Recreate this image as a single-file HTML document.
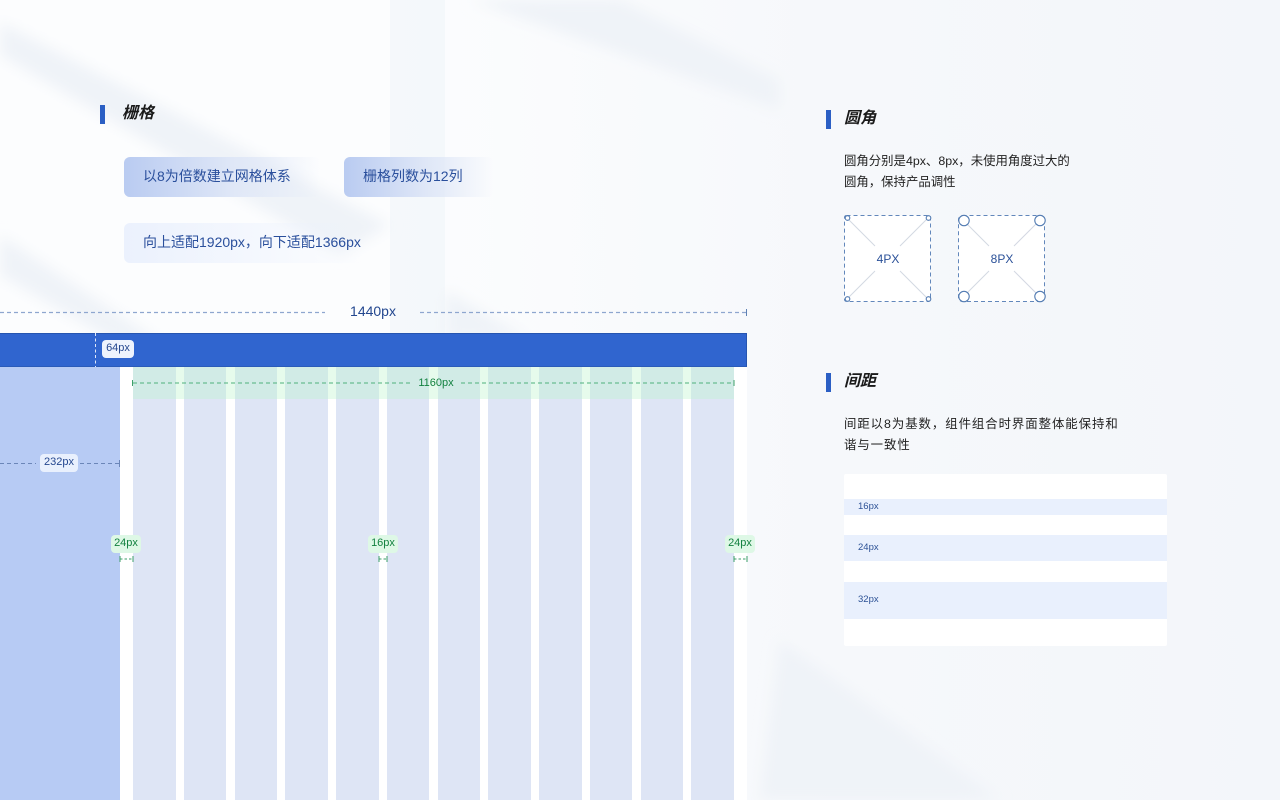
<!DOCTYPE html>
<html lang="zh"><head><meta charset="utf-8"><title>栅格</title>
<style>
html,body{margin:0;padding:0;width:1280px;height:800px;overflow:hidden}
body{position:relative;background:#f6f8fb;font-family:"Liberation Sans","Noto Sans CJK SC",sans-serif}
.a{position:absolute}
.t{position:absolute;white-space:nowrap;line-height:20px}
.bar{position:absolute;width:5px;height:19px;background:#2b5fc4}
.h{position:absolute;white-space:nowrap;font-size:16px;font-weight:700;font-style:italic;color:#1a1a1a;line-height:20px}
.chip{position:absolute;height:40px;border-radius:6px;color:#2a4f9c;font-size:14px;line-height:39px;padding-left:19px;box-sizing:border-box;white-space:nowrap}
.p{position:absolute;font-size:12.4px;color:#222;line-height:20.5px;white-space:nowrap}
.col{position:absolute;top:367px;bottom:0;width:42.5px;background:#dee5f5}
.lab{position:absolute;height:18px;line-height:17px;font-size:11px;text-align:center;border-radius:4px;background:#e9f0fd;color:#25478f}
.g{background:#def8e6;color:#12813f;height:18px}
.row{position:absolute;left:844px;width:323px;background:#e9f0fd;color:#2d5296;font-size:9.5px;padding-left:14px;box-sizing:border-box}
</style></head><body>
<svg class="a" style="left:0;top:0" width="1280" height="800">
<defs>
<linearGradient id="bg" x1="0" y1="0" x2="1" y2="0"><stop offset="0" stop-color="#fcfdfe"/><stop offset=".3" stop-color="#fcfdfe"/><stop offset=".65" stop-color="#f6f8fb"/><stop offset="1" stop-color="#f3f6fa"/></linearGradient>
<filter id="b"><feGaussianBlur stdDeviation="7"/></filter>
</defs>
<rect width="1280" height="800" fill="url(#bg)"/>
<rect x="390" y="0" width="55" height="340" fill="#f3f6fa" opacity=".8"/>
<g filter="url(#b)" fill="#eff3f8">
<polygon points="0,22 0,55 340,255 390,225"/>
<polygon points="0,235 0,275 120,345 165,345"/>
<polygon points="470,0 620,0 780,80 780,110"/>
<polygon points="445,290 530,340 445,340"/>
<polygon points="780,640 1000,800 760,800"/>
</g>
</svg>

<div class="bar" style="left:100px;top:105px"></div>
<div class="h" style="left:122px;top:104px">栅格</div>
<div class="chip" style="left:124px;top:157px;width:196px;background:linear-gradient(90deg,#b9cbf1,#dfe7f7 55%,rgba(250,252,254,0))">以8为倍数建立网格体系</div>
<div class="chip" style="left:344px;top:157px;width:150px;background:linear-gradient(90deg,#b9cbf1,#dfe7f7 55%,rgba(250,252,254,0))">栅格列数为12列</div>
<div class="chip" style="left:124px;top:223px;width:240px;background:linear-gradient(90deg,#ebf1fd,rgba(250,252,254,0))">向上适配1920px，向下适配1366px</div>

<svg class="a" style="left:0;top:305px" width="750" height="16">
<line x1="0" y1="7.5" x2="325" y2="7.5" stroke="#8ea6cf" stroke-width="1.2" stroke-dasharray="4 3"/>
<line x1="420" y1="7.5" x2="746" y2="7.5" stroke="#8ea6cf" stroke-width="1.2" stroke-dasharray="4 3"/>
<line x1="746.5" y1="4" x2="746.5" y2="11" stroke="#5f81b4"/>
</svg>
<div class="t" style="left:330px;top:301px;width:86px;text-align:center;color:#23478f;font-size:14px">1440px</div>

<div class="a" style="left:120px;top:367px;width:627px;bottom:0;background:#fff"></div>
<div class="a" style="left:0;top:367px;width:120px;bottom:0;background:#b7cbf4"></div>
<div class="a" style="left:0;top:333px;width:747px;height:34px;background:#3065cf;border-top:1px solid #2655b0;border-right:1px solid #2655b0;border-bottom:1px solid #2a5bb9;box-sizing:border-box"></div>
<svg class="a" style="left:95px;top:333px" width="2" height="34"><line x1=".5" y1="0" x2=".5" y2="34" stroke="#dfe8fa" stroke-dasharray="3 2.5"/></svg>
<div class="lab" style="left:102px;top:340px;width:32px;border:0;background:#eef3fd">64px</div>

<div class="col" style="left:133px"></div>
<div class="col" style="left:183.75px"></div>
<div class="col" style="left:234.5px"></div>
<div class="col" style="left:285.25px"></div>
<div class="col" style="left:336px"></div>
<div class="col" style="left:386.75px"></div>
<div class="col" style="left:437.5px"></div>
<div class="col" style="left:488.25px"></div>
<div class="col" style="left:539px"></div>
<div class="col" style="left:589.75px"></div>
<div class="col" style="left:640.5px"></div>
<div class="col" style="left:691.25px"></div>

<div class="a" style="left:133px;top:367px;width:601px;height:32px;background:rgba(190,245,205,.38)"></div>

<svg class="a" style="left:0;top:0;pointer-events:none" width="780" height="600">
<g fill="none">
<line x1="133" y1="383" x2="413" y2="383" stroke="#4fb17c" stroke-width="1" stroke-dasharray="4 3"/>
<line x1="461" y1="383" x2="734" y2="383" stroke="#4fb17c" stroke-width="1" stroke-dasharray="4 3"/>
<line x1="132.5" y1="380" x2="132.5" y2="386" stroke="#3e9f6a"/>
<line x1="734" y1="380" x2="734" y2="386" stroke="#3e9f6a"/>
<line x1="0" y1="463.5" x2="36" y2="463.5" stroke="#6b86b8" stroke-dasharray="4 3"/>
<line x1="80" y1="463.5" x2="120" y2="463.5" stroke="#6b86b8" stroke-dasharray="4 3"/>
<line x1="119.5" y1="460" x2="119.5" y2="467" stroke="#6b86b8"/>
<g stroke="#3e9f6a">
<line x1="120" y1="559" x2="133" y2="559" stroke-dasharray="2.5 2"/><line x1="120" y1="556" x2="120" y2="562"/><line x1="133" y1="556" x2="133" y2="562"/>
<line x1="379" y1="559" x2="387" y2="559" stroke-dasharray="2.5 2"/><line x1="379" y1="556" x2="379" y2="562"/><line x1="387" y1="556" x2="387" y2="562"/>
<line x1="734" y1="559" x2="747" y2="559" stroke-dasharray="2.5 2"/><line x1="734" y1="556" x2="734" y2="562"/><line x1="747" y1="556" x2="747" y2="562"/>
</g>
</g>
</svg>
<div class="t" style="left:413px;top:373px;width:46px;text-align:center;font-size:11px;color:#12813f">1160px</div>
<div class="lab" style="left:40px;top:454px;width:38px">232px</div>
<div class="lab g" style="left:111px;top:535px;width:30px">24px</div>
<div class="lab g" style="left:368px;top:535px;width:30px">16px</div>
<div class="lab g" style="left:725px;top:535px;width:30px">24px</div>

<div class="bar" style="left:826px;top:110px"></div>
<div class="h" style="left:844px;top:109px">圆角</div>
<div class="p" style="left:844px;top:151px">圆角分别是4px、8px，未使用角度过大的<br>圆角，保持产品调性</div>

<svg class="a" style="left:840px;top:210px" width="215" height="96">
<g fill="#fff" stroke="#6287bb">
<rect x="4.5" y="5.5" width="86" height="86" rx="2" stroke-dasharray="4 3"/>
<rect x="118.5" y="5.5" width="86" height="86" rx="4" stroke-dasharray="4 3"/>
</g>
<g stroke="#d3d8e2">
<line x1="7" y1="8" x2="35" y2="36"/><line x1="88" y1="8" x2="60" y2="36"/><line x1="7" y1="89" x2="35" y2="61"/><line x1="88" y1="89" x2="60" y2="61"/>
<line x1="124" y1="11" x2="149" y2="36"/><line x1="199" y1="11" x2="174" y2="36"/><line x1="124" y1="86" x2="149" y2="61"/><line x1="199" y1="86" x2="174" y2="61"/>
</g>
<g fill="#fff" stroke="#527bb2" stroke-width="1.1">
<circle cx="7.5" cy="8" r="2.3"/><circle cx="88.5" cy="8" r="2.3"/><circle cx="7.5" cy="89" r="2.3"/><circle cx="88.5" cy="89" r="2.3"/>
<circle cx="124" cy="10.500" r="5.200"/><circle cx="200" cy="10.500" r="5.200"/><circle cx="124" cy="86.500" r="5.200"/><circle cx="200" cy="86.500" r="5.200"/>
</g>
</svg>
<div class="t" style="left:860px;top:249px;width:56px;text-align:center;font-size:12px;color:#2a5098">4PX</div>
<div class="t" style="left:974px;top:249px;width:56px;text-align:center;font-size:12px;color:#2a5098">8PX</div>

<div class="bar" style="left:826px;top:373px"></div>
<div class="h" style="left:844px;top:372px">间距</div>
<div class="p" style="left:844px;top:414px;letter-spacing:.95px">间距以8为基数，组件组合时界面整体能保持和<br>谐与一致性</div>

<div class="a" style="left:844px;top:474px;width:323px;height:172px;background:#fff;border-radius:2px"></div>
<div class="row" style="top:499px;height:16px;line-height:16px">16px</div>
<div class="row" style="top:535px;height:26px;line-height:26px">24px</div>
<div class="row" style="top:582px;height:37px;line-height:35px">32px</div>
</body></html>
